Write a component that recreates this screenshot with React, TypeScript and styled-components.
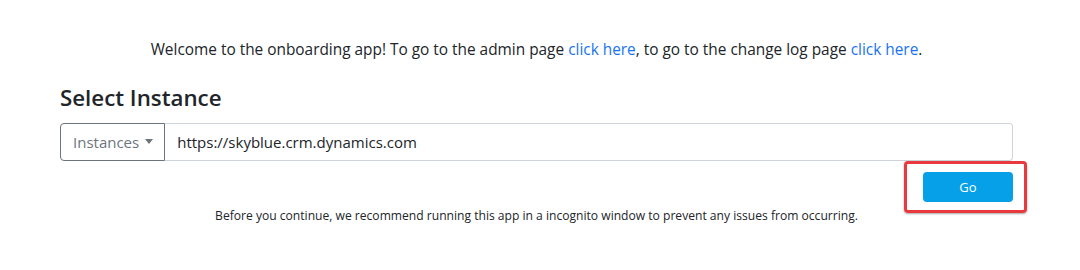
import React from "react";
import styled, { createGlobalStyle } from "styled-components";

const GlobalStyle = createGlobalStyle`
  body {
    margin: 0;
    background: #ffffff;
    color: #212529;
    font-family: "Segoe UI", "Open Sans", "Liberation Sans", sans-serif;
  }
`;

const App = () => {
  return (
    <>
      <GlobalStyle />
      <Page>
        <Intro>
          Welcome to the onboarding app! To go to the admin page{" "}
          <Link href="#">click here</Link>, to go to the change log page{" "}
          <Link href="#">click here</Link>.
        </Intro>
        <Heading>Select Instance</Heading>
        <InputGroup>
          <DropButton type="button">
            Instances
            <Caret />
          </DropButton>
          <UrlInput defaultValue="https://skyblue.crm.dynamics.com" />
        </InputGroup>
        <ActionRow>
          <Highlight>
            <GoButton type="button">Go</GoButton>
          </Highlight>
        </ActionRow>
        <Note>
          Before you continue, we recommend running this app in a incognito
          window to prevent any issues from occurring.
        </Note>
      </Page>
    </>
  );
};

export default App;

const Page = styled.div`
  width: 953px;
  margin-left: 60px;
  padding-top: 39px;
`;

const Intro = styled.p`
  margin: 0;
  text-align: center;
  font-size: 15.4px;
  line-height: 22px;
`;

const Link = styled.a`
  color: #1a73f0;
  text-decoration: none;
`;

const Heading = styled.h4`
  margin: 22px 0 10px;
  font-size: 22.3px;
  font-weight: 600;
  line-height: 30px;
`;

const InputGroup = styled.div`
  display: flex;
  height: 38px;
`;

const DropButton = styled.button`
  display: flex;
  align-items: center;
  gap: 6px;
  padding: 0 11px 0 12px;
  border: 1px solid #6c757d;
  border-radius: 4px 0 0 4px;
  background: #ffffff;
  color: #6c757d;
  font-family: inherit;
  font-size: 15px;
`;

const Caret = styled.span`
  width: 0;
  height: 0;
  border-left: 4.5px solid transparent;
  border-right: 4.5px solid transparent;
  border-top: 5px solid #6c757d;
  margin-top: -2px;
`;

const UrlInput = styled.input`
  flex: 1;
  min-width: 0;
  border: 1px solid #ced4da;
  border-left: none;
  border-radius: 0 4px 4px 0;
  padding: 0 12px;
  color: #212529;
  font-family: inherit;
  font-size: 15px;
  outline: none;
`;

const ActionRow = styled.div`
  display: flex;
  justify-content: flex-end;
  margin-top: 11px;
`;

const Highlight = styled.div`
  position: relative;

  &::after {
    content: "";
    position: absolute;
    top: -11px;
    bottom: -11px;
    left: -19px;
    right: -14px;
    border: 3px solid #e8393e;
    border-radius: 4px;
    box-shadow: 0 1px 2px rgba(0, 0, 0, 0.35);
    pointer-events: none;
  }
`;

const GoButton = styled.button`
  display: block;
  width: 90px;
  height: 30px;
  border: none;
  border-radius: 4px;
  background: #05a0e8;
  color: #ffffff;
  font-family: inherit;
  font-size: 13px;
`;

const Note = styled.p`
  margin: 6px 0 0;
  text-align: center;
  font-size: 12.1px;
  line-height: 16px;
`;
